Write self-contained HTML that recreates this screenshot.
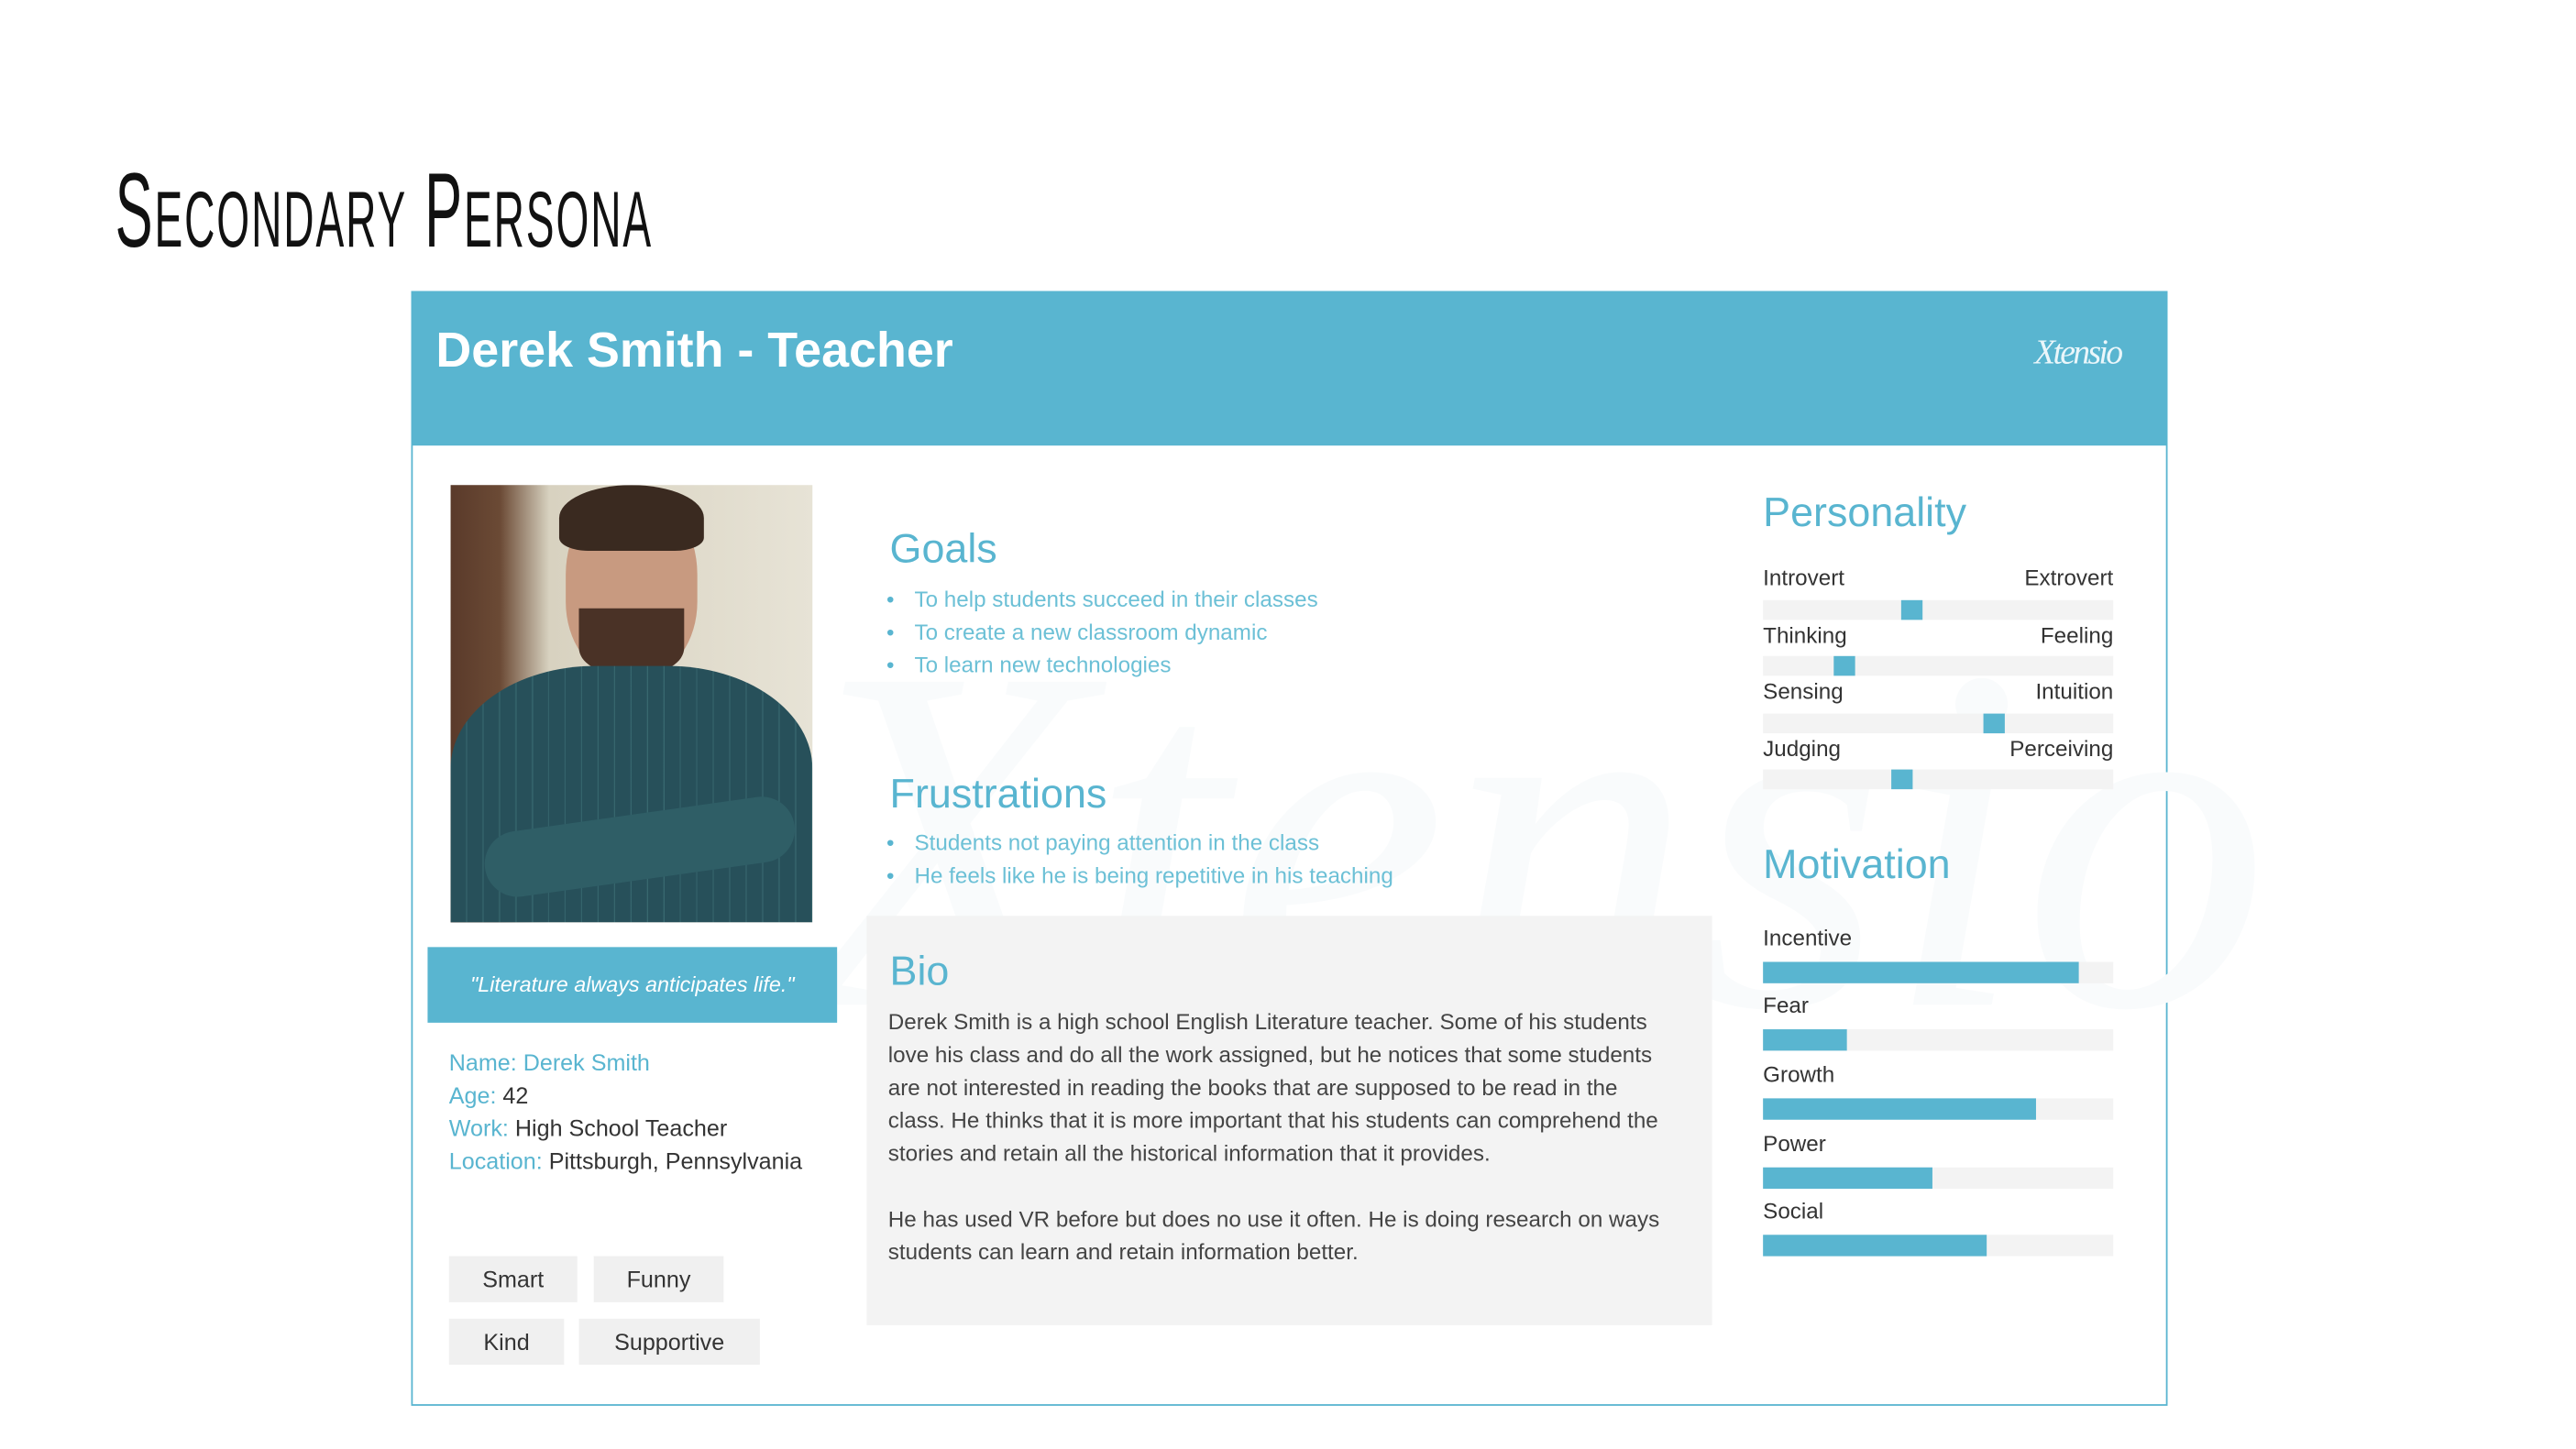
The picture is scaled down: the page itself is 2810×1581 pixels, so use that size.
<!DOCTYPE html>
<html><head><meta charset="utf-8"><style>
html,body{margin:0;padding:0;background:#fff;width:2810px;height:1581px;overflow:hidden}
#s{position:absolute;left:0;top:0;width:1561px;height:878px;transform:scale(1.794);transform-origin:0 0;font-family:"Liberation Sans",sans-serif}
.a{position:absolute;white-space:nowrap}
.t{color:#59b5d0}
.h{font-size:25px;color:#59b5d0;line-height:30px}
.bar{position:absolute;left:1072px;width:213px;height:12px;background:#f3f3f3}
.bar i{position:absolute;top:0;height:12px;background:#59b5d0}
.lbl{font-size:13.5px;color:#333;line-height:18px}
.tag{position:absolute;background:#f0f0f0;color:#333;font-size:14px;line-height:28px;text-align:center}
.li{font-size:13.5px;color:#6cc0d6;line-height:20px}
.li:before{content:"•";position:absolute;left:-17px;color:#59b5d0}
</style></head><body><div id="s">
<div class="a" style="left:70px;top:93px;font-size:64px;line-height:70px;color:#111;font-family:'Liberation Sans Narrow','Liberation Sans',sans-serif;transform:scaleX(0.535);transform-origin:0 0;letter-spacing:2px">S<span style="font-size:48px">ECONDARY</span> P<span style="font-size:48px">ERSONA</span></div>

<div style="position:absolute;left:250px;top:177px;width:1066px;height:676px;border:1px solid #59b5d0;background:#fff"></div>
<div style="position:absolute;left:250px;top:177px;width:1068px;height:94px;background:#59b5d0"></div>
<div class="a" style="left:265px;top:197px;font-size:30px;font-weight:bold;color:#fff;line-height:34px">Derek Smith - Teacher</div>
<div class="a" style="left:1237px;top:199px;font-size:21px;color:#eaf6fa;font-family:'Liberation Serif',serif;font-style:italic;letter-spacing:-1.5px;line-height:30px">Xtensio</div>

<div class="a" style="left:480px;top:360px;font-size:300px;color:#f9fbfc;font-style:italic;font-family:'Liberation Serif',serif;line-height:300px">Xtensio</div>

<div style="position:absolute;left:274px;top:295px;width:220px;height:266px;background:linear-gradient(90deg,#5a3a2a 0,#6b4a35 30px,#d8d2c0 60px,#e7e3d6 100%);overflow:hidden">
 <div style="position:absolute;left:70px;top:5px;width:80px;height:110px;border-radius:45% 45% 40% 40%;background:#c89a80"></div>
 <div style="position:absolute;left:66px;top:0;width:88px;height:40px;border-radius:50% 50% 20% 20%;background:#3a2a20"></div>
 <div style="position:absolute;left:78px;top:75px;width:64px;height:40px;border-radius:0 0 40% 40%;background:#4a3226"></div>
 <div style="position:absolute;left:0;top:110px;width:220px;height:156px;border-radius:40% 40% 0 0;background:repeating-linear-gradient(90deg,#27505a 0,#27505a 9px,#3b6d74 10px),#27505a"></div>
 <div style="position:absolute;left:20px;top:200px;width:190px;height:40px;border-radius:20px;background:#2f5e66;transform:rotate(-8deg)"></div>
</div>

<div style="position:absolute;left:260px;top:576px;width:249px;height:46px;background:#59b5d0"></div>
<div class="a" style="left:260px;width:249px;top:591px;text-align:center;font-size:13px;font-style:italic;color:#fff;line-height:16px">"Literature always anticipates life."</div>

<div class="a" style="left:273px;top:636px;font-size:14px;line-height:20px;color:#333">
<span class="t">Name: Derek Smith</span><br><span class="t">Age:</span> 42<br><span class="t">Work:</span> High School Teacher<br><span class="t">Location:</span> Pittsburgh, Pennsylvania</div>

<div class="tag" style="left:273px;top:764px;width:78px">Smart</div>
<div class="tag" style="left:361px;top:764px;width:79px">Funny</div>
<div class="tag" style="left:273px;top:802px;width:70px">Kind</div>
<div class="tag" style="left:352px;top:802px;width:110px">Supportive</div>

<div class="a h" style="left:541px;top:319px">Goals</div>
<div class="a li" style="left:556px;top:355px">To help students succeed in their classes</div>
<div class="a li" style="left:556px;top:375px">To create a new classroom dynamic</div>
<div class="a li" style="left:556px;top:395px">To learn new technologies</div>
<div class="a h" style="left:541px;top:468px">Frustrations</div>
<div class="a li" style="left:556px;top:503px">Students not paying attention in the class</div>
<div class="a li" style="left:556px;top:523px">He feels like he is being repetitive in his teaching</div>

<div style="position:absolute;left:527px;top:557px;width:514px;height:249px;background:#f2f2f2;opacity:.92"></div>
<div class="a h" style="left:541px;top:576px">Bio</div>
<div class="a" style="left:540px;top:612px;font-size:13.5px;line-height:20px;color:#444;white-space:normal;width:474px">Derek Smith is a high school English Literature teacher. Some of his students love his class and do all the work assigned, but he notices that some students are not interested in reading the books that are supposed to be read in the class. He thinks that it is more important that his students can comprehend the stories and retain all the historical information that it provides.<br><br>He has used VR before but does no use it often. He is doing research on ways students can learn and retain information better.</div>

<div class="a h" style="left:1072px;top:297px">Personality</div>
<div class="a lbl" style="left:1072px;top:343px">Introvert</div><div class="a lbl" style="right:276px;top:343px">Extrovert</div>
<div class="bar" style="top:365px"><i style="left:84px;width:13px"></i></div>
<div class="a lbl" style="left:1072px;top:378px">Thinking</div><div class="a lbl" style="right:276px;top:378px">Feeling</div>
<div class="bar" style="top:399px"><i style="left:43px;width:13px"></i></div>
<div class="a lbl" style="left:1072px;top:412px">Sensing</div><div class="a lbl" style="right:276px;top:412px">Intuition</div>
<div class="bar" style="top:434px"><i style="left:134px;width:13px"></i></div>
<div class="a lbl" style="left:1072px;top:447px">Judging</div><div class="a lbl" style="right:276px;top:447px">Perceiving</div>
<div class="bar" style="top:468px"><i style="left:78px;width:13px"></i></div>

<div class="a h" style="left:1072px;top:511px">Motivation</div>
<div class="a lbl" style="left:1072px;top:562px">Incentive</div>
<div class="bar" style="top:585px;height:13px"><i style="left:0;width:192px;height:13px"></i></div>
<div class="a lbl" style="left:1072px;top:603px">Fear</div>
<div class="bar" style="top:626px;height:13px"><i style="left:0;width:51px;height:13px"></i></div>
<div class="a lbl" style="left:1072px;top:645px">Growth</div>
<div class="bar" style="top:668px;height:13px"><i style="left:0;width:166px;height:13px"></i></div>
<div class="a lbl" style="left:1072px;top:687px">Power</div>
<div class="bar" style="top:710px;height:13px"><i style="left:0;width:103px;height:13px"></i></div>
<div class="a lbl" style="left:1072px;top:728px">Social</div>
<div class="bar" style="top:751px;height:13px"><i style="left:0;width:136px;height:13px"></i></div>
</div></body></html>
